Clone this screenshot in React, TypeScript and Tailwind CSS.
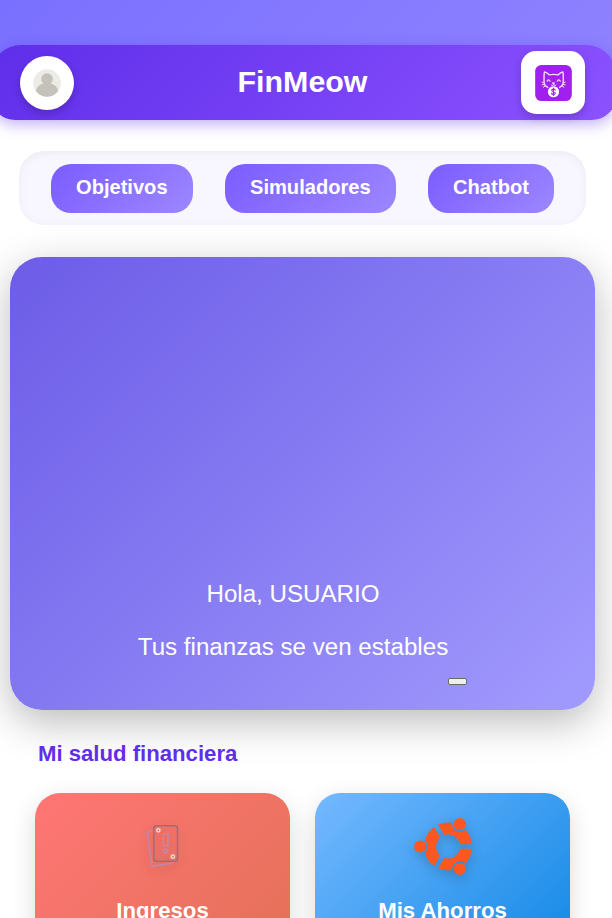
import { clsx } from 'clsx';
import type { ReactNode } from 'react';

interface HealthCardProps {
  title: string;
  className: string;
  children: ReactNode;
}

const navItems = ['Objetivos', 'Simuladores', 'Chatbot'];

function AvatarIcon() {
  return (
    <svg viewBox="0 0 28 28" className="w-7 h-7">
      <defs>
        <clipPath id="avatar">
          <circle cx="14" cy="14" r="13.8" />
        </clipPath>
      </defs>
      <circle cx="14" cy="14" r="13.8" fill="#edebe6" />
      <g clipPath="url(#avatar)" fill="#c5c2bb">
        <circle cx="14" cy="10" r="5.8" />
        <path d="M11 13h6c.2 1.500 1.300 1.800 3.300 2.600 3 1.200 4.500 3.800 4.700 6.900C22 26.500 18.500 28 14 28S6 26.500 3 22.500c.2-3.100 1.700-5.700 4.700-6.900C9.700 14.800 10.800 14.500 11 13z" />
      </g>
    </svg>
  );
}

function CatLogo() {
  return (
    <svg viewBox="75 72 111 109" className="w-[37px] h-9">
      <rect x="75" y="72" width="111" height="109" rx="19" fill="#a020f0" />
      <g fill="none" stroke="#f6dcff" strokeWidth="4.200" strokeLinecap="round" strokeLinejoin="round">
        <path d="M113 140c-8-4-11-9-11-17 0-9-1-20 1-30 6 1 11 5 15 9 9-2 17-2 26 0 4-4 9-8 15-9 2 10 1 21 1 30 0 8-3 13-11 17" />
        <path d="M111 121c2-5 7-5 9 0M142 121c2-5 7-5 9 0" strokeWidth="3.600" />
        <path d="M128 126h6l-3 3zM131 129v3M131 132c-2 3-5 3-7 1M131 132c2 3 5 3 7 1" strokeWidth="3" />
        <path d="M101 126l-5-2M102 131l-6 1M105 136l-5 3M161 126l5-2M160 131l6 1M157 136l5 3" strokeWidth="3" />
      </g>
      <circle cx="130.500" cy="153" r="17" fill="#fff" />
      <path d="M136 148c-2-4-11-4-11 .5 0 5 11 3.500 11 9 0 5-10 4.500-11.500 0M130.500 142v22" fill="none" stroke="#a020f0" strokeWidth="3.400" strokeLinecap="round" />
    </svg>
  );
}

function CardsIcon() {
  return (
    <svg viewBox="435 430 105 140" className="w-[35px] h-[46.700px] drop-shadow-[0_4px_6px_rgba(0,0,0,0.15)]" fill="none">
      <path d="M456 454l-10 2q-5 1-4 6l13 93q1 6 6 5l59-10" stroke="#bb88b4" strokeWidth="4.500" />
      <rect x="461.500" y="438.500" width="71" height="106" rx="8" stroke="#a16c6c" strokeWidth="4.500" />
      <rect x="490" y="462" width="14" height="37" rx="2" stroke="#bb88b4" strokeWidth="4.500" />
      <circle cx="497" cy="514" r="6" stroke="#bb88b4" strokeWidth="4.500" />
      <circle cx="475" cy="452" r="5" stroke="#efd3d3" strokeWidth="4.500" />
      <circle cx="518.500" cy="531" r="5" stroke="#efd3d3" strokeWidth="4.500" />
    </svg>
  );
}

function UbuntuIcon() {
  return (
    <svg viewBox="-33.500 -30.500 60 60" className="w-[60px] h-[60px] drop-shadow-[0_4px_6px_rgba(0,0,0,0.2)]">
      <mask id="ring" maskUnits="userSpaceOnUse" x="-33" y="-30" width="60" height="60">
        <circle cx="1.600" r="18" fill="none" stroke="#fff" strokeWidth="12" />
        <path d="M1.600 0H30M1.600 0L-13.400 -26M1.600 0L-13.400 26" stroke="#000" strokeWidth="4.600" />
        <circle cx="-26.300" r="7.700" fill="#000" />
        <circle cx="13.300" cy="-22.400" r="7.700" fill="#000" />
        <circle cx="13.300" cy="22.400" r="7.700" fill="#000" />
      </mask>
      <g fill="#ff5722">
        <rect x="-30" y="-30" width="60" height="60" mask="url(#ring)" />
        <circle cx="-26.300" r="6.100" />
        <circle cx="13.300" cy="-22.400" r="6.100" />
        <circle cx="13.300" cy="22.400" r="6.100" />
      </g>
    </svg>
  );
}

function HealthCard({ title, className, children }: HealthCardProps) {
  return (
    <article
      className={clsx(
        'w-[255px] h-[200px] shrink-0 rounded-[25px] flex flex-col items-center pt-[23px] shadow-[0_8px_25px_rgba(0,0,0,0.15)]',
        className
      )}
    >
      <div className="h-[60px] flex items-center justify-center">{children}</div>
      <h3 className="mt-[22px] text-[22.200px] leading-[26px] font-bold text-white">{title}</h3>
    </article>
  );
}

export default function App() {
  return (
    <div className="w-full h-[918px] overflow-hidden bg-white font-['Liberation_Sans',Arial,sans-serif]">
      <div className="h-[75px] bg-[linear-gradient(135deg,#7a70ff,#8f82ff)] [clip-path:inset(0_0_12px_0)]" />

      <header className="relative -mt-[30px] -ml-[9px] w-[625px] h-[75px] pl-[29px] pr-[31px] flex items-center justify-between rounded-t-[30px] rounded-b-[24px] bg-[linear-gradient(135deg,#5f2eea,#8c52ff)] shadow-[0_4px_15px_rgba(95,46,234,0.4)]">
        <button className="w-[54px] h-[54px] rounded-full bg-white flex items-center justify-center shadow-[0_4px_8px_rgba(0,0,0,0.2)]">
          <AvatarIcon />
        </button>
        <h1 className="mb-[3px] ml-[10px] text-[30.400px] leading-9 font-bold text-white">FinMeow</h1>
        <button className="w-[64px] h-[63px] rounded-[15px] bg-white flex items-center justify-center shadow-[0_4px_8px_rgba(0,0,0,0.2)]">
          <CatLogo />
        </button>
      </header>

      <nav className="mt-[31px] ml-[19px] w-[567px] h-[74px] px-8 flex items-center justify-between rounded-[25px] bg-[#f8f7ff] shadow-[inset_0_2px_10px_rgba(0,0,0,0.05)]">
        {navItems.map((item) => (
          <button
            key={item}
            className="h-[49px] px-[25px] pb-[2px] rounded-[20px] bg-[linear-gradient(135deg,#7b5cff,#9d87ff)] text-[20.100px] font-bold text-white"
          >
            {item}
          </button>
        ))}
      </nav>

      <section className="mt-8 ml-[10px] w-[585px] h-[453px] pb-[25px] flex items-end justify-center rounded-[32px] bg-[linear-gradient(135deg,#6c5ce7,#a29bfe)] shadow-[0_12px_40px_rgba(0,0,0,0.27)]">
        <div className="mb-[24px] text-center text-[24.150px] leading-7 text-white">
          <p>Hola, USUARIO</p>
          <p className="mt-[25px]">Tus finanzas se ven estables</p>
        </div>
        <button className="w-[19px] h-[7px] rounded-[2px] border border-[#6b6b6b] bg-[#efefef]" />
      </section>

      <h2 className="mt-[30px] ml-[38px] text-[22.150px] leading-7 font-bold text-[#5f2eea]">Mi salud financiera</h2>

      <div className="mt-[25px] ml-[35px] flex gap-[25px]">
        <HealthCard title="Ingresos" className="bg-[linear-gradient(135deg,#ff7675,#e17055)]">
          <CardsIcon />
        </HealthCard>
        <HealthCard title="Mis Ahorros" className="bg-[linear-gradient(135deg,#74b9ff,#0984e3)]">
          <UbuntuIcon />
        </HealthCard>
      </div>
    </div>
  );
}
